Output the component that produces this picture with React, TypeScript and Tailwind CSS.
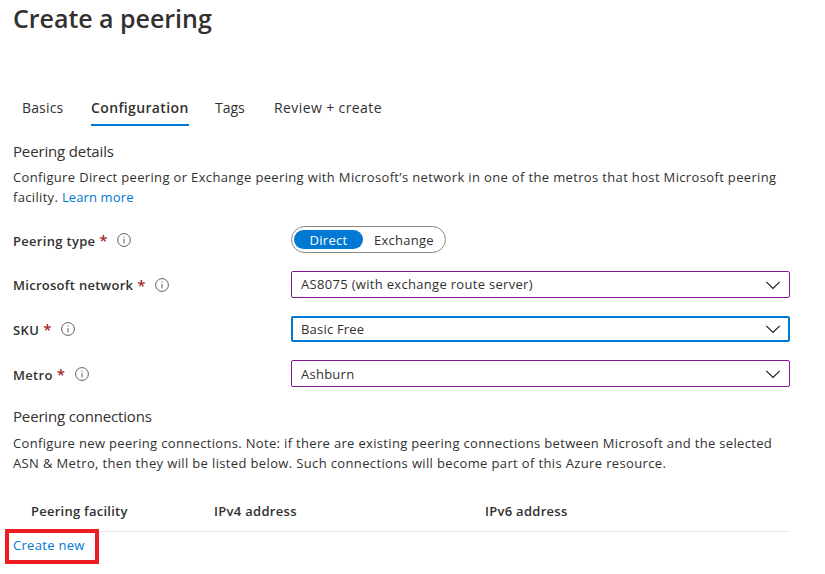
import type { ReactNode } from "react";

function InfoIcon() {
  return (
    <svg width="14" height="14" viewBox="0 0 14 14" fill="none" stroke="#605e5c" className="shrink-0">
      <circle cx="7" cy="7" r="6.4" strokeWidth="1" />
      <path d="M7 6V10.4" strokeWidth="1" />
      <path d="M7 3.6V4.7" strokeWidth="1" />
    </svg>
  );
}

function Chevron() {
  return (
    <svg width="16" height="10" viewBox="0 0 16 10" fill="none" stroke="#201f1e" strokeWidth="1.2" className="shrink-0">
      <path d="M1.3 1.8L8 8.5L14.7 1.8" />
    </svg>
  );
}

function Field({ label, className, children }: { label: ReactNode; className: string; children: ReactNode }) {
  return (
    <div className={`flex items-center ${className}`}>
      <div className="flex w-[278px] items-center text-[13px] leading-5 font-semibold">
        {label}
        <span className="ml-[4px] w-[8px] text-[15px] text-[#a4262c]">*</span>
        <span className="ml-[10px]"><InfoIcon /></span>
      </div>
      {children}
    </div>
  );
}

function Select({ value, frame }: { value: ReactNode; frame: string }) {
  return (
    <div className={`flex w-[499px] items-center justify-between rounded-[2px] ${frame}`}>
      {value}
      <Chevron />
    </div>
  );
}

export default function App() {
  return (
    <main className="relative h-[574px] w-[825px] overflow-hidden bg-white pl-[13px] font-['Open_Sans','Noto_Sans',sans-serif] text-[13px] leading-5 text-[#323130]">
      <h1 className="pt-[2px] text-[25px] leading-8 font-semibold tracking-[-0.03px] whitespace-nowrap">Create a peering</h1>

      <nav className="mt-[61px] flex h-[31px] pt-px text-[14px] leading-6 whitespace-nowrap">
        <div className="ml-[9px] w-[69px] tracking-[0.15px]">Basics</div>
        <div className="w-[98px] border-b-2 border-[#0078d4] font-semibold tracking-[0.36px]">Configuration</div>
        <div className="ml-[26px] w-[59px]">Tags</div>
        <div className="tracking-[0.4px]">Review + create</div>
      </nav>

      <h2 className="mt-[15px] text-[15px] leading-5 tracking-[-0.15px]">Peering details</h2>
      <p className="mt-[6px] whitespace-nowrap">
        <span className="tracking-[0.35px]">Configure Direct peering or Exchange peering with Microsoft’s network in one of the metros that host Microsoft peering</span>
        <br />
        <span className="tracking-[0.33px]">facility. </span>
        <a className="tracking-[0.12px] text-[#0078d4]">Learn more</a>
      </p>

      <Field className="mt-[19px] h-[27px]" label={<span className="pt-[3px] tracking-[0.3px]">Peering type</span>}>
        <div className="flex h-[27px] w-[155px] items-center rounded-full border border-[#8a8886] pl-[2px]">
          <div className="flex h-[19px] w-[69px] items-center justify-center rounded-full bg-[#0078d4] tracking-[0.3px] text-white">Direct</div>
          <span className="ml-[11px] tracking-[0.25px]">Exchange</span>
        </div>
      </Field>
      <Field className="mt-[18px] h-[27px]" label={<span className="pt-px tracking-[0.28px]">Microsoft network</span>}>
        <Select frame="h-[27px] border border-[#881798] pr-[8px] pl-[9px]" value={<span className="pb-px tracking-[0.31px]">AS8075 (with exchange route server)</span>} />
      </Field>
      <Field className="mt-[18px] h-[26px]" label={<span className="pt-px tracking-[0.4px]">SKU</span>}>
        <Select frame="h-[26px] border-2 border-[#0078d4] pr-[7px] pl-[8px]" value={<span className="tracking-[0.2px]">Basic Free</span>} />
      </Field>
      <Field className="mt-[18px] h-[27px]" label={<span className="pt-[3px] tracking-[0.3px]">Metro</span>}>
        <Select frame="h-[27px] border border-[#881798] pr-[8px] pl-[9px]" value={<span className="tracking-[0.25px]">Ashburn</span>} />
      </Field>

      <h2 className="mt-[19px] text-[15px] leading-5 tracking-[-0.16px]">Peering connections</h2>
      <p className="mt-[7px] whitespace-nowrap">
        <span className="tracking-[0.33px]">Configure new peering connections. Note: if there are existing peering connections between Microsoft and the selected</span>
        <br />
        <span className="tracking-[0.36px]">ASN &amp; Metro, then they will be listed below. Such connections will become part of this Azure resource.</span>
      </p>

      <div className="mt-[28px] flex h-[31px] w-[777px] border-b border-[#e8e8e8] pl-[18px] font-semibold">
        <div className="w-[183px] tracking-[0.25px]">Peering facility</div>
        <div className="w-[271px] tracking-[0.3px]">IPv4 address</div>
        <div className="tracking-[0.28px]">IPv6 address</div>
      </div>
      <a className="mt-[3px] block tracking-[0.3px] text-[#0078d4]">Create new</a>
      <div className="absolute top-[529px] left-[5px] h-[35px] w-[94px] border-4 border-[#ed1c24]" />
    </main>
  );
}
